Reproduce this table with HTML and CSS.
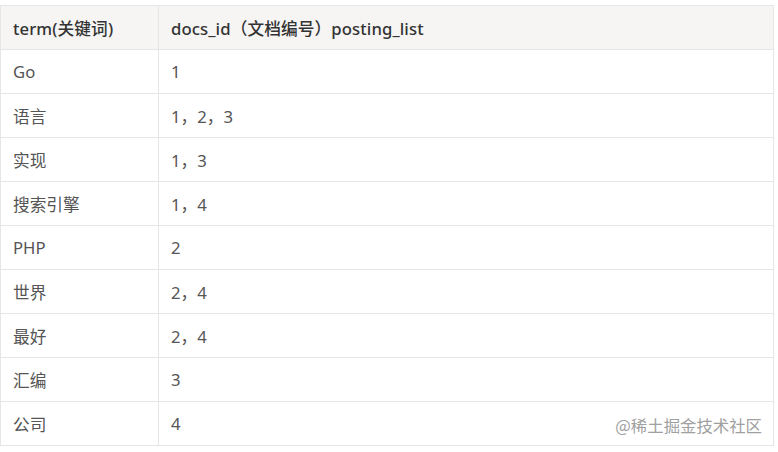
FILE: index.html
```html
<!DOCTYPE html>
<html>
<head>
<meta charset="utf-8">
<link rel="stylesheet" href="styles.css">
</head>
<body>
<div class="wrap">
<table class="tbl">
<thead>
<tr><th class="c1">term(关键词)</th><th>docs_id（文档编号）posting_list</th></tr>
</thead>
<tbody>
<tr><td>Go</td><td>1</td></tr>
<tr><td>语言</td><td>1，2，3</td></tr>
<tr><td>实现</td><td>1，3</td></tr>
<tr><td>搜索引擎</td><td>1，4</td></tr>
<tr><td>PHP</td><td>2</td></tr>
<tr><td>世界</td><td>2，4</td></tr>
<tr><td>最好</td><td>2，4</td></tr>
<tr><td>汇编</td><td>3</td></tr>
<tr><td>公司</td><td>4</td></tr>
</tbody>
</table>
<div class="mark">@稀土掘金技术社区</div>
</div>
</body>
</html>
```
FILE: styles.css
```css
html, body {
  margin: 0;
  padding: 0;
  background: #fff;
}
.wrap {
  position: relative;
  padding: 5px 0 0 0;
  width: 774px;
}
.tbl {
  border-collapse: collapse;
  width: 774px;
  font-family: "Noto Sans", "Noto Sans CJK SC", sans-serif;
  font-size: 16.7px;
  color: #555;
}
.tbl th, .tbl td {
  border: 1px solid #e6e6e6;
  height: 44px;
  padding: 0 0 0 12px;
  text-align: left;
  box-sizing: border-box;
}
.tbl th {
  background: #f6f5f3;
  color: #333;
  font-weight: 500;
  height: 44px;
  letter-spacing: 0.1px;
}
.tbl tr > :first-child {
  width: 158px;
}
.mark {
  position: absolute;
  right: 12px;
  bottom: 9px;
  font-family: "Noto Sans CJK SC", sans-serif;
  font-size: 16.4px;
  color: #a0a0a0;
}
```
